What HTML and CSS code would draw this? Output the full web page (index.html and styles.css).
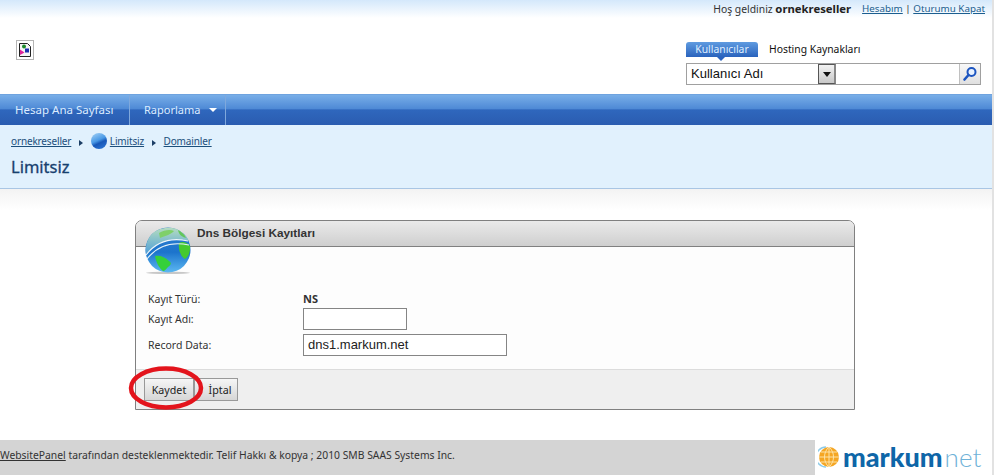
FILE: index.html
```html
<!DOCTYPE html>
<html lang="tr">
<head>
<meta charset="utf-8">
<title>Dns Bölgesi Kayıtları</title>
<link rel="stylesheet" href="styles.css">
</head>
<body>
<div class="page">
  <div class="topbar">
    <span>Hoş geldiniz <b>ornekreseller</b></span>
    <span class="toplinks"><a href="#">Hesabım</a> | <a href="#">Oturumu Kapat</a></span>
  </div>
  <header class="header">
    <svg class="broken" width="18" height="20" viewBox="0 0 18 20">
      <rect x="0.5" y="0.5" width="17" height="19" fill="#fff" stroke="#b5b5b5"/>
      <path d="M3.500 3.500H11.500L14.500 6.500V16.500H3.500Z" fill="#f4f4f4" stroke="#222"/>
      <circle cx="8" cy="6.500" r="2" fill="#1a8a2a"/>
      <path d="M4 9.500L8.500 12.500L4 15Z" fill="#e0249a"/>
      <rect x="9" y="8.500" width="4" height="4" fill="#1a2fb0"/>
    </svg>
    <div class="search">
      <div class="tabs">
        <span class="tab active">Kullanıcılar</span>
        <span class="tab">Hosting Kaynakları</span>
      </div>
      <div class="searchbox">
        <span class="select">Kullanıcı Adı</span>
        <span class="arrowbtn"><i></i></span>
        <span class="query"></span>
        <span class="go">
          <svg width="16" height="16" viewBox="0 0 16 16"><circle cx="9.500" cy="6" r="4" fill="#e8f2ff" stroke="#1d55c0" stroke-width="2"/><path d="M6.500 9L2.500 13.500" stroke="#1d55c0" stroke-width="2.600" stroke-linecap="round"/></svg>
        </span>
      </div>
    </div>
  </header>
  <nav class="nav">
    <a class="navitem first" href="#">Hesap Ana Sayfası</a>
    <a class="navitem second" href="#">Raporlama<i class="caret"></i></a>
  </nav>
  <section class="crumbs">
    <div class="trail">
      <a href="#">ornekreseller</a><i class="sep"></i><span class="ball"></span><a href="#">Limitsiz</a><i class="sep"></i><a href="#">Domainler</a>
    </div>
    <h1>Limitsiz</h1>
  </section>
  <div class="fade"></div>
  <main class="panel">
    <svg class="globe" width="46" height="48" viewBox="0 0 46 48">
      <defs>
        <linearGradient id="sea" x1="0" y1="0" x2="0" y2="1"><stop offset="0" stop-color="#2f7fd0"/><stop offset="0.55" stop-color="#1c74cc"/><stop offset="1" stop-color="#5cb8f2"/></linearGradient>
        <linearGradient id="cap" x1="0" y1="0" x2="0" y2="1"><stop offset="0" stop-color="#b4dcc0"/><stop offset="1" stop-color="#4f9fd8"/></linearGradient>
      </defs>
      <ellipse cx="23" cy="45.800" rx="22" ry="1.200" fill="#c8c8c8"/>
      <circle cx="23" cy="23" r="22.500" fill="url(#sea)"/>
      <path d="M7 7C12 2 20 0 27 1C35 2 41 8 44 14C30 9 14 13 1 27C0 20 2 12 7 7Z" fill="url(#cap)"/>
      <path d="M14 6C19 3 25 2 29 4C27 7 20 9 15 11Z" fill="#7fd06a"/>
      <path d="M33 3C37 5 40 8 41 11C37 10 34 8 33 3Z" fill="#63c65a"/>
      <path d="M10 29C15 28 20 30 24 34C27 36 26 38 23 40C21 42 20 44 18 44C14 41 11 35 10 29Z" fill="#35d03a"/>
      <path d="M34 16C37 14 42 15 45 19C45.500 26 43 30 40 32C36 30 33 23 34 16Z" fill="#45c92e"/>
      <path d="M2 32C12 19 25 14 44 18" fill="none" stroke="#e4f1f8" stroke-width="1.200"/>
      <path d="M1 28C11 15 25 10 43 14" fill="none" stroke="#eef6fa" stroke-width="1.200"/>
    </svg>
    <div class="panelhead">Dns Bölgesi Kayıtları</div>
    <div class="panelbody">
      <div class="row rowtype"><label>Kayıt Türü:</label><b class="value">NS</b></div>
      <div class="row"><label>Kayıt Adı:</label><span class="field short"></span></div>
      <div class="row"><label>Record Data:</label><span class="field long">dns1.markum.net</span></div>
    </div>
    <div class="panelfoot">
      <button class="btn save" type="button">Kaydet</button>
      <button class="btn cancel" type="button">İptal</button>
    </div>
    <svg class="ring" width="76" height="44" viewBox="0 0 76 44">
      <ellipse cx="38" cy="22" rx="35" ry="19.500" fill="none" stroke="#e3141c" stroke-width="4.500"/>
    </svg>
  </main>
  <footer class="footer">
    <div class="copy"><a href="#">WebsitePanel</a> tarafından desteklenmektedir. Telif Hakkı &amp; kopya ; 2010 SMB SAAS Systems Inc.</div>
    <div class="logo">
      <svg width="22" height="22" viewBox="0 0 22 22">
        <circle cx="11" cy="11" r="10" fill="#f5a623"/>
        <path d="M11 1V21M1 11H21M3 6H19M3 16H19M11 1C5 6 5 16 11 21M11 1C17 6 17 16 11 21" fill="none" stroke="#fde3a8" stroke-width="1"/>
        <path d="M8 1A10 10 0 0 0 8 21" fill="none" stroke="#8ecbe8" stroke-width="1.500"/>
      </svg>
      <span class="brand">markum</span><span class="tld">net</span>
    </div>
  </footer>
</div>
</body>
</html>
```
FILE: styles.css
```css
* { box-sizing: border-box; }
html, body { margin: 0; padding: 0; background: #fff; }
body { font-family: "Noto Sans", sans-serif; font-size: 10.350px; color: #222; }
.page { width: 994px; height: 475px; overflow: hidden; position: relative; border-right: 2px solid #e2e2e2; }
a { color: #1b5e8f; text-decoration: underline; }

.topbar {
  height: 18px; padding: 2px 7px 0 0;
  display: flex; justify-content: flex-end; gap: 11px;
  background: linear-gradient(#d4e8fb, #fff);
  line-height: 14px; color: #333;
}
.topbar b { color: #222; font-size: 11.300px; }
.toplinks { font-size: 9.800px; }

.header { height: 76px; display: flex; justify-content: space-between; padding: 22px 11px 0 16px; }
.search { width: 295px; padding-top: 2px; }
.tabs { height: 21px; display: flex; gap: 11px; align-items: flex-start; }
.tab { height: 15px; line-height: 14px; color: #111; }
.tab.active {
  width: 72px; text-align: center; color: #dfeeff; position: relative; border-radius: 3px 3px 0 0;
  background: linear-gradient(#5f9be0, #2a63bd);
}
.tab.active::after {
  content: ""; position: absolute; left: 31px; top: 15px;
  border: 4px solid transparent; border-top-color: #2a63bd; border-bottom: 0;
}
.searchbox { height: 22px; display: flex; border: 1px solid #a0a0a0; background: #fff; }
.select { width: 131px; padding-left: 4px; font: 13px/20px "Liberation Sans", sans-serif; color: #111; }
.arrowbtn { width: 18px; background: linear-gradient(#f2f2f2, #c8c8c8); border: 1px solid #555; border-right: 2px solid #888; display: flex; align-items: center; justify-content: center; }
.arrowbtn i { border: 4px solid transparent; border-top: 5px solid #111; border-bottom: 0; }
.query { flex: 1; border-right: 1px solid #c0c0c0; }
.go { width: 20px; background: linear-gradient(#f8f8f8, #e0e0e0); display: flex; align-items: center; justify-content: center; }

.nav {
  height: 31px; display: flex; border-top: 1px solid #6fa3df;
  background: linear-gradient(#78aee8 0, #4f8ad6 45%, #2f67bd 50%, #2a5cb0 100%);
}
.navitem { height: 30px; line-height: 30px; font-size: 11px; color: #dcecff; text-decoration: none; border-right: 1px solid #7fa8dc; }
.navitem.first { width: 130px; padding-left: 15px; font-size: 11.500px; }
.navitem.second { width: 96px; padding-left: 14px; }
.caret { display: inline-block; margin: 0 0 2px 9px; border: 4px solid transparent; border-top: 4px solid #fff; border-bottom: 0; }

.crumbs { height: 64px; padding: 6px 11px 0; background: #e1f1fd; border-bottom: 1px solid #a9c6e4; }
.trail { height: 19px; display: flex; align-items: center; font-size: 10px; letter-spacing: -0.150px; }
.trail a { color: #1c4f7c; }
.sep { margin: 4px 8px 0 7.500px; border: 3.500px solid transparent; border-left: 4px solid #1c3f66; border-right: 0; }
.ball {
  width: 16px; height: 16px; margin-right: 3px; border-radius: 50%;
  background: linear-gradient(155deg, #a8d4f6 0, #4a9ae6 45%, #1858b8 60%, #2f7ad8 100%);
}
h1 { margin: 6px 0 0; font-size: 16.500px; line-height: 22px; font-weight: 400; color: #17406e; -webkit-text-stroke: 0.300px #17406e; }

.fade { height: 21px; background: linear-gradient(#f3f3f3, #fff); }

.panel { position: relative; width: 720px; height: 190px; margin: 10px 0 0 135px; border: 1px solid #808080; border-radius: 7px 7px 0 0; background: #fdfdfd; }
.panelhead {
  height: 26px; padding-left: 61px; font: 700 11.800px/24px "Liberation Sans", sans-serif; color: #333;
  background: linear-gradient(#eaeaea, #cfcfcf); border-bottom: 1px solid #808080; border-radius: 6px 6px 0 0;
}
.panelbody { height: 122px; padding: 43px 0 0 12px; }
.row { display: flex; align-items: center; height: 22px; margin-bottom: 4px; }
.rowtype { height: 17px; margin-bottom: 1px; }
.row label { width: 155px; color: #333; font-size: 10.500px; }
.value { color: #333; font-size: 11px; }
.field { height: 22px; border: 1px solid #858585; background: #fff; font: 13px/20px "Liberation Sans", sans-serif; color: #222; padding-left: 4px; }
.field.short { width: 104px; }
.field.long { width: 204px; }
.panelfoot { height: 40px; padding: 8px 0 0 8px; display: flex; background: #efefef; border-top: 1px solid #dcdcdc; }
.btn { height: 23px; padding: 0; border: 1px solid #999; background: linear-gradient(#f6f6f6, #d6d6d6); font: 10.700px "Noto Sans", sans-serif; color: #222; }
.save { width: 50px; }
.cancel { width: 44px; padding-left: 8px; }
.globe { position: absolute; left: 9px; top: 6px; }
.ring { position: absolute; left: -8px; top: 145px; }

.footer { display: flex; margin-top: 30px; height: 35px; }
.copy { width: 815px; background: #d4d4d4; padding-top: 8px; line-height: 14px; color: #333; white-space: nowrap; }
.copy a { color: #333; }
.logo { flex: 1; display: flex; align-items: center; padding: 0 0 2px 3px; }
.brand { margin-left: 3px; font: 900 27px/30px Lato, sans-serif; color: #0e66a8; }
.tld { font: 300 26px/30px Lato, sans-serif; color: #6fb2d8; margin-left: 2px; }
```
